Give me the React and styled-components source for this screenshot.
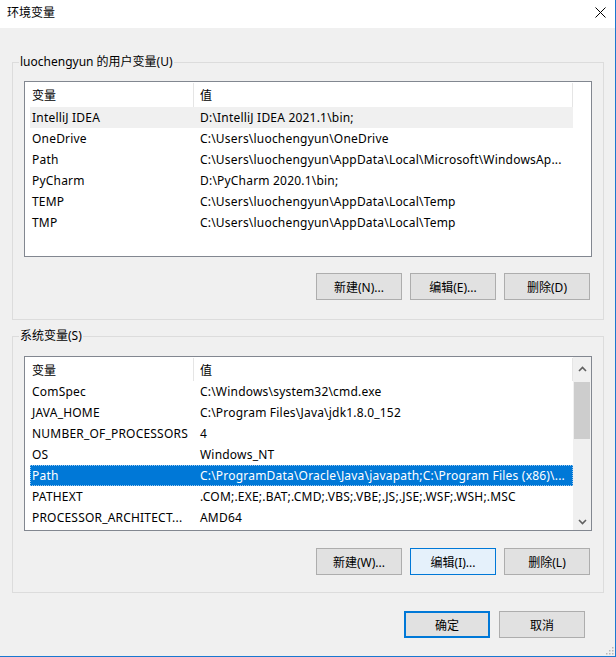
import React from "react";
import styled, { createGlobalStyle } from "styled-components";

const userVars = [
	["IntelliJ IDEA", "D:\\IntelliJ IDEA 2021.1\\bin;"],
	["OneDrive", "C:\\Users\\luochengyun\\OneDrive"],
	["Path", "C:\\Users\\luochengyun\\AppData\\Local\\Microsoft\\WindowsAp..."],
	["PyCharm", "D:\\PyCharm 2020.1\\bin;"],
	["TEMP", "C:\\Users\\luochengyun\\AppData\\Local\\Temp"],
	["TMP", "C:\\Users\\luochengyun\\AppData\\Local\\Temp"],
];

const systemVars = [
	["ComSpec", "C:\\Windows\\system32\\cmd.exe"],
	["JAVA_HOME", "C:\\Program Files\\Java\\jdk1.8.0_152"],
	["NUMBER_OF_PROCESSORS", "4"],
	["OS", "Windows_NT"],
	["Path", "C:\\ProgramData\\Oracle\\Java\\javapath;C:\\Program Files (x86)\\..."],
	["PATHEXT", ".COM;.EXE;.BAT;.CMD;.VBS;.VBE;.JS;.JSE;.WSF;.WSH;.MSC"],
	["PROCESSOR_ARCHITECT...", "AMD64"],
];

export default function App() {
	return (
		<>
			<GlobalStyle />
			<Window>
				<TitleBar>
					<span>环境变量</span>
					<CloseButton>
						<svg width="11" height="11" viewBox="0 0 11 11">
							<path d="M0.5 0.5 L10.5 10.5 M10.5 0.5 L0.5 10.5" stroke="#000" strokeWidth="1" />
						</svg>
					</CloseButton>
				</TitleBar>
				<Body>
					<Group $top={18} $bottom={19}>
						<Legend>luochengyun 的用户变量(U)</Legend>
						<VarList rows={userVars} height={176} headerHeight={25} inactive={0} />
						<ButtonRow $gap={16}>
							<Button>新建(N)...</Button>
							<Button>编辑(E)...</Button>
							<Button>删除(D)</Button>
						</ButtonRow>
					</Group>
					<Group $top={19} $bottom={17} style={{ marginTop: 16 }}>
						<Legend>系统变量(S)</Legend>
						<VarList rows={systemVars} height={175} headerHeight={24} selected={4} scroll />
						<ButtonRow $gap={17}>
							<Button>新建(W)...</Button>
							<Button $hover>编辑(I)...</Button>
							<Button>删除(L)</Button>
						</ButtonRow>
					</Group>
					<Footer>
						<Button $default>确定</Button>
						<Button>取消</Button>
					</Footer>
				</Body>
				<Grip>
					<svg width="9" height="9" viewBox="0 0 9 9">
						{[
							[7, 1],
							[4, 4],
							[7, 4],
							[1, 7],
							[4, 7],
							[7, 7],
						].map(([x, y]) => (
							<rect key={x + "-" + y} x={x} y={y} width="1.5" height="1.5" fill="#b8b8b8" />
						))}
					</svg>
				</Grip>
			</Window>
		</>
	);
}

function VarList({ rows, height, headerHeight, selected, inactive, scroll }) {
	return (
		<ListBox $height={height}>
			<ListContent>
				<Header $height={headerHeight}>
					<HeaderCell $width={169} $pad={7}>
						变量
					</HeaderCell>
					<HeaderCell $width={379} $pad={6}>
						值
					</HeaderCell>
				</Header>
				{rows.map(([name, value], i) => (
					<Row key={name + i} $selected={i === selected} $inactive={i === inactive}>
						<NameCell>{name}</NameCell>
						<ValueCell>{value}</ValueCell>
					</Row>
				))}
			</ListContent>
			{scroll ? (
				<ScrollBar>
					<ArrowButton $height={headerHeight}>
						<svg width="9" height="6" viewBox="0 0 9 6">
							<path d="M1 5 L4.5 1.5 L8 5" fill="none" stroke="#606060" strokeWidth="1.6" />
						</svg>
					</ArrowButton>
					<Thumb />
					<Track />
					<ArrowButton $height={17}>
						<svg width="9" height="6" viewBox="0 0 9 6">
							<path d="M1 1 L4.5 4.5 L8 1" fill="none" stroke="#606060" strokeWidth="1.6" />
						</svg>
					</ArrowButton>
				</ScrollBar>
			) : (
				<ScrollSpace />
			)}
		</ListBox>
	);
}

const GlobalStyle = createGlobalStyle`
	* {
		box-sizing: border-box;
	}
	body {
		margin: 0;
		font-family: "Noto Sans", "Noto Sans CJK SC", sans-serif;
		font-size: 12px;
		color: #000;
	}
`;

const Window = styled.div`
	position: relative;
	width: 616px;
	height: 657px;
	display: flex;
	flex-direction: column;
	background: #f0f0f0;
	border-right: 1px solid #1a78d0;
	border-bottom: 1px solid #1a78d0;
	overflow: hidden;
`;

const TitleBar = styled.div`
	height: 28px;
	flex: none;
	display: flex;
	align-items: center;
	justify-content: space-between;
	padding: 0 0 4px 7px;
	background: #fff;
	font-size: 12px;
`;

const CloseButton = styled.div`
	width: 46px;
	height: 24px;
	display: flex;
	align-items: center;
	justify-content: center;
	margin-right: -8px;
`;

const Body = styled.div`
	flex: 1;
	padding: 34px 11px 0 12px;
`;

const Group = styled.div`
	position: relative;
	border: 1px solid #dcdcdc;
	padding: ${(p) => p.$top}px 11px ${(p) => p.$bottom}px 11px;
`;

const Legend = styled.span`
	position: absolute;
	top: -9px;
	left: 6px;
	padding: 0 1px;
	line-height: 16px;
	background: #f0f0f0;
	white-space: nowrap;
`;

const ListBox = styled.div`
	height: ${(p) => p.$height}px;
	display: flex;
	border: 1px solid #828790;
	background: #fff;
	overflow: hidden;
`;

const ListContent = styled.div`
	width: 548px;
	flex: none;
`;

const Header = styled.div`
	display: flex;
	height: ${(p) => p.$height}px;
	padding-top: 1px;
`;

const HeaderCell = styled.div`
	width: ${(p) => p.$width}px;
	padding-left: ${(p) => p.$pad}px;
	border-right: 1px solid #e5e5e5;
	display: flex;
	align-items: center;
`;

const Row = styled.div`
	display: grid;
	grid-template-columns: 164px 1fr;
	height: 21px;
	line-height: 21px;
	margin-left: 5px;
	letter-spacing: 0.2px;
	background: ${(p) => (p.$selected ? "#0078d7" : p.$inactive ? "#f0f0f0" : "transparent")};
	color: ${(p) => (p.$selected ? "#fff" : "#000")};
	outline: ${(p) => (p.$selected ? "1px dotted #9cc8ee" : "none")};
	outline-offset: -1px;
`;

const NameCell = styled.div`
	padding-left: 2px;
	white-space: nowrap;
	overflow: hidden;
`;

const ValueCell = styled.div`
	padding-left: 6px;
	white-space: nowrap;
	overflow: hidden;
`;

const ScrollSpace = styled.div`
	flex: 1;
`;

const ScrollBar = styled.div`
	flex: 1;
	display: flex;
	flex-direction: column;
	background: #f0f0f0;
`;

const ArrowButton = styled.div`
	height: ${(p) => p.$height}px;
	display: flex;
	align-items: center;
	justify-content: center;
	flex: none;
`;

const Thumb = styled.div`
	height: 57px;
	margin: 1px 1px 0 1px;
	background: #cdcdcd;
`;

const Track = styled.div`
	flex: 1;
`;

const ButtonRow = styled.div`
	display: flex;
	justify-content: flex-end;
	gap: 8px;
	margin-top: ${(p) => p.$gap}px;
	padding-right: 2px;
`;

const Button = styled.div`
	width: 86px;
	height: 27px;
	display: flex;
	align-items: center;
	justify-content: center;
	background: ${(p) => (p.$hover ? "#e5f1fb" : "#e1e1e1")};
	border: ${(p) => (p.$default ? "2px solid #0078d7" : p.$hover ? "1px solid #0078d7" : "1px solid #adadad")};
	white-space: nowrap;
`;

const Footer = styled.div`
	display: flex;
	justify-content: flex-end;
	gap: 9px;
	margin-top: 18px;
	padding-right: 19px;
`;

const Grip = styled.div`
	position: absolute;
	right: 1px;
	bottom: 1px;
	line-height: 0;
`;
